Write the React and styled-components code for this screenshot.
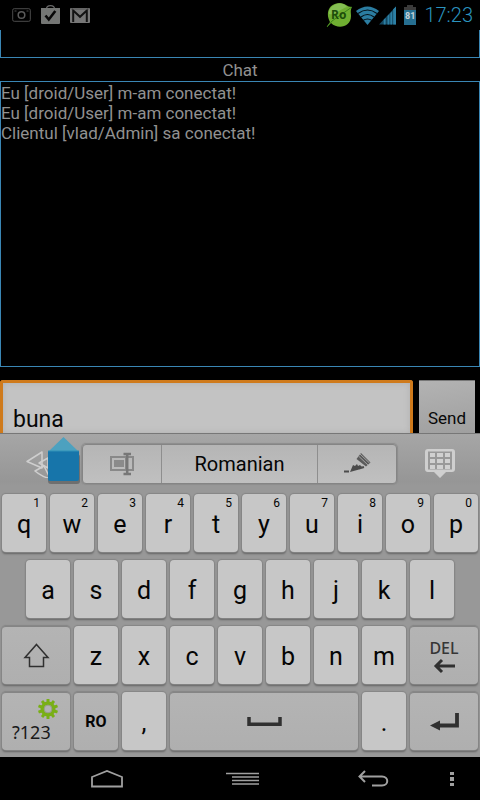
import React, { useState } from "react";
import styled, { createGlobalStyle, css } from "styled-components";

const GlobalStyle = createGlobalStyle`
  *, *::before, *::after { box-sizing: border-box; }
  body { margin: 0; background: #000; font-family: Roboto, "Noto Sans", sans-serif; }
  button, input { font: inherit; color: inherit; margin: 0; padding: 0; border: 0; border-radius: 0; }
  button { cursor: pointer; background: none; }
  svg { display: block; }
`;

const Screen = styled.div`
  display: flex;
  flex-direction: column;
  min-height: 100vh;
  background: #000;
`;

const StatusBar = styled.header`
  display: flex;
  justify-content: space-between;
  align-items: center;
  height: 30px;
  padding: 0 7px 0 12px;
`;

const StatusGroup = styled.div`
  display: flex;
  align-items: center;
  gap: ${(p) => p.$gap || 0};
`;

const Clock = styled.time`
  color: #2b93bf;
  font-size: 20px;
  font-weight: 300;
  line-height: 30px;
`;

const BatteryLevel = styled.text`
  font: bold 9px Roboto, sans-serif;
  fill: #c9d3d8;
`;

const BadgeText = styled.text`
  font: bold 12px "Open Sans", "Noto Sans", sans-serif;
  fill: #1d4d0b;
`;

const Panel = styled.section`
  border: 1px solid #3a86b4;
  border-top-width: ${(p) => (p.$open ? 0 : "1px")};
  height: ${(p) => (p.$open ? "28px" : "auto")};
  flex: ${(p) => (p.$open ? "none" : 1)};
  padding-top: 1px;
`;

const Title = styled.h1`
  margin: 0;
  height: 23px;
  color: #919191;
  font-size: 17px;
  font-weight: 400;
  line-height: 24px;
  text-align: center;
`;

const Message = styled.p`
  margin: 0;
  color: #919191;
  font-size: 17px;
  line-height: 20px;
`;

const Composer = styled.form`
  display: flex;
  gap: 6px;
  height: 53px;
  margin-top: 13px;
  padding-right: 5px;
`;

const MessageInput = styled.input`
  flex: 1;
  min-width: 0;
  padding: 22px 10px 0;
  border: 3px solid #cf7a1b;
  border-bottom: 0;
  border-radius: 3px 3px 0 0;
  outline: 0;
  background: #c3c3c3;
  box-shadow: inset 0 0 6px #b0b0b0;
  color: #080808;
  font-size: 23px;
`;

const SendButton = styled.button`
  width: 56px;
  padding-top: 22px;
  border-top: 1px solid #777;
  background: linear-gradient(170deg, #b3b3b3, #9f9f9f);
  color: #080808;
  font-size: 17px;
`;

const Keyboard = styled.section`
  display: grid;
  row-gap: 8px;
  background: #989898;
  color: #050505;
  padding-bottom: 7px;
`;

const Toolbar = styled.div`
  position: relative;
  display: flex;
  align-items: center;
  height: 53px;
  padding: 7px 24px 0 25px;
  border-top: 1px solid #777;
  background: linear-gradient(#a6a6a6, #969696 48px, #989898);
`;

const ToolButton = styled.button`
  display: grid;
  place-items: center;
  width: 32px;
  height: 40px;
`;

const LanguageBar = styled.div`
  display: flex;
  flex: 1;
  height: 40px;
  margin: 0 27px 0 25px;
  border: 1px solid #858585;
  border-radius: 4px;
  background: linear-gradient(#b5b5b5, #c0c0c0);
  box-shadow: 0 0 1px 1px #8c8c8c;
`;

const LanguageItem = styled.button`
  display: grid;
  place-items: center;
  flex: ${(p) => (p.$main ? 2 : 1)};
  border-left: ${(p) => (p.$divided ? "1px solid #8e8e8e" : 0)};
  font-size: 20px;
`;

const CursorHandle = styled.div`
  position: absolute;
  left: 47px;
  top: 2px;
`;

const KeyRow = styled.div`
  display: grid;
  grid-template-columns: repeat(20, 1fr);
`;

const softKey = css`
  background: linear-gradient(#b4b4b4, #afafaf);
  border-top: 1px solid #858585;
`;

const Key = styled.button`
  position: relative;
  display: flex;
  flex-direction: column;
  align-items: center;
  justify-content: center;
  grid-column: ${(p) => (p.$start ? `${p.$start} / ` : "")} span ${(p) => p.$span || 2};
  height: 58px;
  margin: 0 2px;
  padding-top: ${(p) => (p.$letter ? "4px" : 0)};
  border-radius: 4px;
  background: #c7c7c7;
  box-shadow: 0 0 1px 1px #858585, 0 2px 2px #646464;
  font-size: ${(p) => (p.$small ? "16px" : "25px")};
  font-weight: ${(p) => (p.$bold ? 700 : 400)};
  line-height: 28px;
  ${(p) => p.$soft && softKey}
`;

const KeyHint = styled.sup`
  position: absolute;
  top: 3px;
  right: 6px;
  font-size: 12px;
  line-height: 12px;
`;

const ModeLabel = styled.span`
  align-self: flex-start;
  margin-left: 10px;
  color: #191919;
  font: 18px/26px "Noto Sans", sans-serif;
`;

const GearSlot = styled.span`
  align-self: flex-end;
  margin-right: 12px;
`;

const DeleteLabel = styled.span`
  color: #363636;
  font: 500 16px/20px "Noto Sans", sans-serif;
`;

const NavBar = styled.nav`
  display: grid;
  grid-template-columns: 40px 1fr 1fr 1fr 40px;
  place-items: center;
  height: 43px;
`;

const NavButton = styled.button`
  display: grid;
  place-items: center;
  width: ${(p) => (p.$narrow ? "24px" : "40px")};
  height: 40px;
  grid-column: ${(p) => p.$col};
  justify-self: ${(p) => (p.$narrow ? "start" : "center")};
`;

const CameraIcon = () => (
  <svg width="19" height="14" viewBox="0 0 19 14" fill="none" stroke="#4b4b4b">
    <rect x=".7" y=".7" width="17.6" height="12.6" rx="1.5" />
    <circle cx="9.5" cy="7" r="3.3" stroke="#5a5a5a" strokeWidth="1.5" />
    <path d="M2.5 3h2M14.5 3h2" />
  </svg>
);

const MarketIcon = () => (
  <svg width="19" height="20" viewBox="0 0 19 20">
    <path d="M5.5 5V4C5.5 1.500 7 .6 9.500 .6s4 .9 4 3.400V5" fill="none" stroke="#6a6a6a" strokeWidth="1.2" />
    <path d="M0 3h19v15a1 1 0 0 1-1 1H1a1 1 0 0 1-1-1z" fill="#747674" />
    <path d="m4.500 10.500 3.300 4L14.300 6" fill="none" stroke="#080808" strokeWidth="2.600" />
  </svg>
);

const MailIcon = () => (
  <svg width="20" height="15" viewBox="0 0 20 15">
    <rect width="20" height="15" rx="1" fill="#777" />
    <path d="M3.200 14V2.500L10 8.800l6.800-6.300V14" fill="none" stroke="#141414" strokeWidth="2" />
    <path d="M1 1h18" stroke="#555" />
  </svg>
);

const LeafBadge = () => (
  <svg width="27" height="26" viewBox="0 0 27 26">
    <path d="M1 25c1-3 2-3 3-5C-1 11 3 1 14 1c5 0 7 4 12 4-2 4-1 5-1 9 0 11-13 14-20 7z" fill="#6fae31" />
    <path d="M3 9C6 1 17-1 21 5 14 7 9 14 3 12z" fill="#94c96a" opacity=".6" />
    <path d="M1 25 6 19 26 5" fill="none" stroke="#3d821b" />
    <BadgeText x="5" y="17">Ro</BadgeText>
  </svg>
);

const WifiIcon = () => (
  <svg width="23" height="19" viewBox="0 0 23 19">
    <path d="M0 5Q11.500-4 23 5L11.500 19z" fill="#2b7da1" />
    <path d="M2 7.500Q11.500 .5 21 7.500M5 11Q11.500 6 18 11M7 14.500q4.500-3 9 0" fill="none" stroke="#041016" strokeWidth="1.200" />
  </svg>
);

const SignalIcon = () => (
  <svg width="17" height="19" viewBox="0 0 18 19">
    <path d="M0 19 18 0v19z" fill="#154861" />
    <path d="M5 19v-5l2-2v7zM9 19V10l2-2v11zM12 19V7l2-2v14zM15 19V3l3-3v19z" fill="#2c7fa4" />
  </svg>
);

const BatteryIcon = () => (
  <svg width="12" height="20" viewBox="0 0 12 20">
    <path d="M3 0h6v2h3v3H0V2h3z" fill="#3b3b3b" />
    <path d="M0 5h12v15H0z" fill="#266f91" />
    <BatteryLevel x="1" y="14">81</BatteryLevel>
  </svg>
);

const ArrowsIcon = () => (
  <svg width="32" height="28" viewBox="0 0 32 28" fill="none" stroke="#cecece" strokeWidth="1.500" strokeLinejoin="round">
    <path d="M2 11.500 17 2v16z" />
    <path d="m14 13 9-5v10z" />
    <path d="m10 21 9-5 6 12c-6 0-10-3-15-7z" />
  </svg>
);

const HandleIcon = () => (
  <svg width="34" height="50" viewBox="0 0 34 50">
    <rect x="1" y="18" width="32" height="30" rx="3" fill="#555" opacity=".6" />
    <path d="M16.500 1 32 16H1z" fill="#4da1bf" />
    <path d="M1 15h31v28a2 2 0 0 1-2 2H3a2 2 0 0 1-2-2z" fill="#1775aa" />
    <path d="M1 15h31" stroke="#3192b8" />
  </svg>
);

const FieldIcon = () => (
  <svg width="26" height="24" viewBox="0 0 26 24">
    <path d="M2 5h15v13H2zM19 5h5v13h-5" fill="none" stroke="#898989" strokeWidth="2" />
    <path d="M5 8h10v7H5z" fill="#8b8b8b" />
    <path d="M14.500 2H22M18.200 2v20M14.500 22H22" fill="none" stroke="#777" strokeWidth="2.500" />
  </svg>
);

const PencilIcon = () => (
  <svg width="27" height="21" viewBox="0 0 27 21">
    <path d="m17 0 9.500 9.500-4.500 4-9.500-7.500z" fill="#5b5b5b" />
    <path d="m14.500 3 9.500 9M16 1l9.500 9" stroke="#a3a3a3" />
    <path d="m9 12-3 7 9-2.500 3-2.500-2-2-2 1-1-2-2 2z" fill="#4c4c4c" />
    <path d="M0 18.500h5M15 15.500l5-1.500" stroke="#4c4c4c" strokeWidth="2" />
  </svg>
);

const HideKeyboardIcon = () => (
  <svg width="30" height="29" viewBox="0 0 30 29">
    <path d="M3 0h24a3 3 0 0 1 3 3v17a3 3 0 0 1-3 3h-6l-6 6-6-6H3a3 3 0 0 1-3-3V3a3 3 0 0 1 3-3z" fill="#cfcfcf" />
    <path d="M3 2.500h24v18H3z" fill="#999" />
    <path d="M5 4h5v4H5zm7 0h6v4h-6zm8 0h5v4h-5zM5 10h5v4H5zm7 0h6v4h-6zm8 0h5v4h-5zM5 16h5v4H5zm7 0h6v4h-6zm8 0h5v4h-5zM9 22h12l-6 6z" fill="#d0d0d0" />
  </svg>
);

const ShiftIcon = () => (
  <svg width="27" height="25" viewBox="0 0 27 25" fill="none" stroke="#303030" strokeWidth="1.500">
    <path d="M13.500 1.500 25 14.500h-4.500v9h-14v-9H2z" />
  </svg>
);

const gearTeeth = Array.from({ length: 10 }, (_, i) => i * 36);

const GearIcon = () => (
  <svg width="20" height="20" viewBox="0 0 20 20">
    {gearTeeth.map((angle) => (
      <rect key={angle} x="8.500" y="0" width="3" height="5" rx=".5" fill="#79af16" transform={`rotate(${angle} 10 10)`} />
    ))}
    <circle cx="10" cy="10" r="5.700" fill="none" stroke="#79af16" strokeWidth="3.600" />
    <circle cx="10" cy="10" r="3.900" fill="none" stroke="#969d88" />
  </svg>
);

const DeleteIcon = () => (
  <svg width="23" height="16" viewBox="0 0 23 16" fill="none" stroke="#303030" strokeWidth="3">
    <path d="M22 8H3M9 2 3 8l6 6" />
  </svg>
);

const SpaceIcon = () => (
  <svg width="35" height="9" viewBox="0 0 35 9">
    <path d="M2 0v7.300h31V0" fill="none" stroke="#303030" strokeWidth="3.500" />
  </svg>
);

const EnterIcon = () => (
  <svg width="29" height="18" viewBox="0 0 29 18">
    <path d="M27 0v12.500H8" fill="none" stroke="#303030" strokeWidth="3.800" />
    <path d="m0 12.500 10-5v10z" fill="#303030" />
  </svg>
);

const HomeIcon = () => (
  <svg width="34" height="19" viewBox="0 0 34 19">
    <path d="M2 17.500V8l15-6 15 6v9.500z" fill="none" stroke="#a0a0a0" strokeWidth="1.800" />
  </svg>
);

const RecentIcon = () => (
  <svg width="38" height="13" viewBox="-5 0 38 13" stroke="#a0a0a0" strokeWidth="1.500">
    <path d="M0 1.500h33M6 5h27M6 8.500h27M6 12h27" />
  </svg>
);

const BackIcon = () => (
  <svg width="31" height="17" viewBox="0 0 31 17" fill="none" stroke="#a0a0a0" strokeWidth="2">
    <path d="M1 6.500h23c7 0 7 9 0 9H14M7 1 1.500 6.500 7 12" />
  </svg>
);

const MoreIcon = () => (
  <svg width="4" height="16" viewBox="0 0 4 16" fill="#a0a0a0">
    <path d="M0 1h4v3H0zM0 6h4v4H0zM0 12h4v3H0z" />
  </svg>
);

const messages = [
  "Eu [droid/User] m-am conectat!",
  "Eu [droid/User] m-am conectat!",
  "Clientul [vlad/Admin] sa conectat!",
];

export default function App() {
  const [draft, setDraft] = useState("buna");
  const type = (char) => setDraft((value) => value + char);
  const letter = (char, extra) => (
    <Key key={char} type="button" $letter onClick={() => type(char)} {...extra}>
      {char}
    </Key>
  );

  return (
    <Screen>
      <GlobalStyle />
      <StatusBar>
        <StatusGroup $gap="10px">
          <CameraIcon />
          <MarketIcon />
          <MailIcon />
        </StatusGroup>
        <StatusGroup $gap="8px">
          <StatusGroup $gap="3px">
            <LeafBadge />
            <StatusGroup>
              <WifiIcon />
              <SignalIcon />
            </StatusGroup>
          </StatusGroup>
          <BatteryIcon />
          <Clock>17:23</Clock>
        </StatusGroup>
      </StatusBar>

      <Panel $open />
      <Title>Chat</Title>
      <Panel>
        {messages.map((text, i) => (
          <Message key={i}>{text}</Message>
        ))}
      </Panel>

      <Composer onSubmit={(e) => e.preventDefault()}>
        <MessageInput aria-label="Message" value={draft} onChange={(e) => setDraft(e.target.value)} />
        <SendButton type="submit">Send</SendButton>
      </Composer>

      <Keyboard aria-label="Keyboard">
        <Toolbar>
          <ToolButton type="button" aria-label="Previous"><ArrowsIcon /></ToolButton>
          <LanguageBar>
            <LanguageItem type="button" aria-label="Edit field"><FieldIcon /></LanguageItem>
            <LanguageItem type="button" $main $divided>Romanian</LanguageItem>
            <LanguageItem type="button" $divided aria-label="Handwriting"><PencilIcon /></LanguageItem>
          </LanguageBar>
          <ToolButton type="button" aria-label="Hide keyboard"><HideKeyboardIcon /></ToolButton>
          <CursorHandle><HandleIcon /></CursorHandle>
        </Toolbar>
        <KeyRow>
          {[..."qwertyuiop"].map((char, i) => (
            <Key key={char} type="button" $letter onClick={() => type(char)}>
              {char}
              <KeyHint>{(i + 1) % 10}</KeyHint>
            </Key>
          ))}
        </KeyRow>
        <KeyRow>{[..."asdfghjkl"].map((char, i) => letter(char, i === 0 ? { $start: 2 } : {}))}</KeyRow>
        <KeyRow>
          <Key type="button" $span={3} $soft aria-label="Shift"><ShiftIcon /></Key>
          {[..."zxcvbnm"].map((char) => letter(char))}
          <Key type="button" $span={3} $soft onClick={() => setDraft((v) => v.slice(0, -1))}>
            <DeleteLabel>DEL</DeleteLabel>
            <DeleteIcon />
          </Key>
        </KeyRow>
        <KeyRow>
          <Key type="button" $span={3} $soft>
            <GearSlot><GearIcon /></GearSlot>
            <ModeLabel>?123</ModeLabel>
          </Key>
          <Key type="button" $soft $small $bold>RO</Key>
          {letter(",")}
          <Key type="button" $span={8} $soft aria-label="Space" onClick={() => type(" ")}><SpaceIcon /></Key>
          {letter(".")}
          <Key type="button" $span={3} $soft aria-label="Enter"><EnterIcon /></Key>
        </KeyRow>
      </Keyboard>

      <NavBar>
        <NavButton type="button" $col={2} aria-label="Home"><HomeIcon /></NavButton>
        <NavButton type="button" $col={3} aria-label="Recent apps"><RecentIcon /></NavButton>
        <NavButton type="button" $col={4} aria-label="Back"><BackIcon /></NavButton>
        <NavButton type="button" $col={5} $narrow aria-label="More"><MoreIcon /></NavButton>
      </NavBar>
    </Screen>
  );
}
